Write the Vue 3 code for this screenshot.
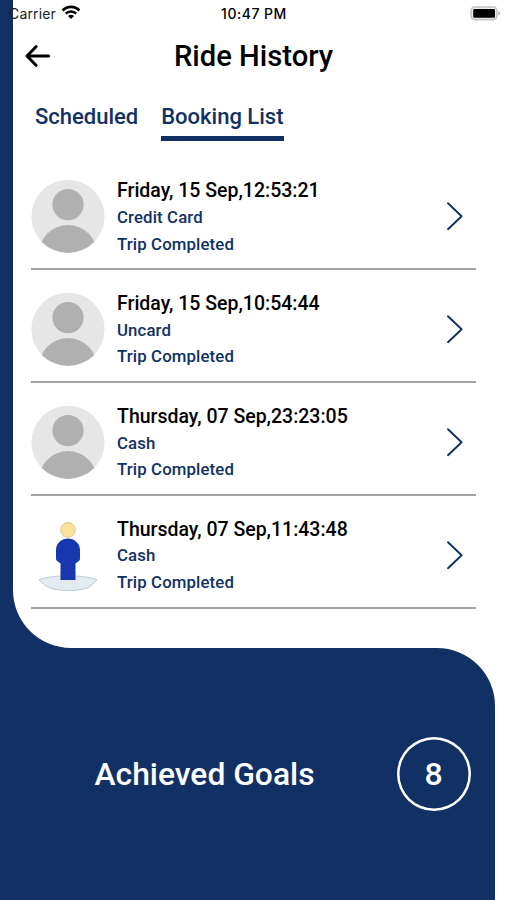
<script setup>
const rides = [
  { id: 1, date: 'Friday, 15 Sep,12:53:21', payment: 'Credit Card', status: 'Trip Completed', avatar: 'default' },
  { id: 2, date: 'Friday, 15 Sep,10:54:44', payment: 'Uncard', status: 'Trip Completed', avatar: 'default' },
  { id: 3, date: 'Thursday, 07 Sep,23:23:05', payment: 'Cash', status: 'Trip Completed', avatar: 'default' },
  { id: 4, date: 'Thursday, 07 Sep,11:43:48', payment: 'Cash', status: 'Trip Completed', avatar: 'figure' },
]
</script>

<template>
  <div class="screen">
    <main class="sheet">
      <div class="status-bar">
        <div class="carrier">
          <span>Carrier</span>
          <svg class="wifi" width="20" height="15" viewBox="0 0 20 15">
            <path d="M1.6 5.5C6.3.7 13.7.7 18.4 5.5" fill="none" stroke="#000" stroke-width="2.6" />
            <path d="M4.7 8.7C7.7 5.8 12.3 5.8 15.3 8.7" fill="none" stroke="#000" stroke-width="2.4" />
            <path d="M7 11C8.7 9.3 11.3 9.3 13 11L10 14Z" fill="#000" />
          </svg>
        </div>
        <span class="clock">10:47 PM</span>
        <svg class="battery" width="31" height="15" viewBox="0 0 31 15">
          <rect x="1" y="1" width="26" height="12.6" rx="3.8" fill="#eee" stroke="#c4c4c4" stroke-width="1.6" />
          <rect x="3.2" y="3" width="21.8" height="8.8" rx="1" fill="#000" />
          <path d="M28.4 5.2C30.7 6 30.7 8.6 28.4 9.4Z" fill="#aaa" />
        </svg>
      </div>

      <header class="header">
        <svg class="back" width="26" height="22" viewBox="0 0 26 22">
          <path d="M11 1.7L2 11L11 20.3M2.5 11H23.6" fill="none" stroke="#000" stroke-width="3" stroke-linecap="round" stroke-linejoin="round" />
        </svg>
        <h1>Ride History</h1>
      </header>

      <nav class="tabs">
        <span class="tab">Scheduled</span>
        <span class="tab active">Booking List</span>
      </nav>

      <ul class="rides">
        <li v-for="ride in rides" :key="ride.id" class="ride">
          <svg v-if="ride.avatar === 'default'" class="avatar" width="74" height="74" viewBox="0 0 74 74">
            <defs>
              <clipPath :id="'clip-' + ride.id"><circle cx="37" cy="37.3" r="36.6" /></clipPath>
            </defs>
            <circle cx="37" cy="37.3" r="36.6" fill="#e6e6e6" />
            <circle cx="37" cy="25.6" r="15.6" fill="#b0b0b0" />
            <circle cx="37" cy="75.1" r="29" fill="#b0b0b0" :clip-path="`url(#clip-${ride.id})`" />
          </svg>
          <svg v-else class="avatar" width="74" height="74" viewBox="0 0 74 74">
            <path d="M8 62C17 56.5 57 56.5 66 62C62 66 59 69 56 70C45 73.5 29 73.5 19 70C15 68.5 12 66 8 62Z" fill="#e2eaf2" stroke="#bccbd6" />
            <circle cx="37" cy="11.8" r="7.3" fill="#fbe39b" stroke="#d9c68b" />
            <path d="M25 32C25 25 31 20.5 37 20.5S49 25 49 32V41C49 43 46.5 43.5 44.5 45.5V62H29.5V45.5C27.5 43.5 25 43 25 41Z" fill="#1637ae" />
          </svg>
          <div class="info">
            <div class="date">{{ ride.date }}</div>
            <div class="detail">{{ ride.payment }}</div>
            <div class="detail">{{ ride.status }}</div>
          </div>
          <svg class="chevron" width="18" height="30" viewBox="0 0 18 30">
            <path d="M2 2.2L15.6 15.2L2 28.2" fill="none" stroke="#113164" stroke-width="1.9" stroke-linecap="round" stroke-linejoin="round" />
          </svg>
        </li>
      </ul>
    </main>

    <div class="footer">
      <section class="goals">
        <span class="goals-label">Achieved Goals</span>
        <span class="goals-count">8</span>
      </section>
    </div>
  </div>
</template>

<style>
body {
  margin: 0;
  background: #fff;
}
</style>

<style scoped>
.screen {
  width: 507px;
  height: 900px;
  display: flex;
  flex-direction: column;
  overflow: hidden;
  font-family: Roboto, sans-serif;
  font-weight: 500;
  color: #000;
  background: linear-gradient(to right, #113164 50%, #fff 50%);
}
.sheet {
  box-sizing: border-box;
  height: 648px;
  margin-left: 13px;
  background: #fff;
  border-bottom-left-radius: 58px;
}
.status-bar {
  height: 28px;
  margin-left: -13px;
  padding: 0 6px 0 9px;
  display: grid;
  grid-template-columns: 1fr auto 1fr;
  align-items: center;
  font-family: Inter, sans-serif;
  font-size: 14px;
}
.carrier {
  display: flex;
  align-items: center;
  gap: 5px;
  margin-top: -2px;
  font-weight: 400;
  letter-spacing: 0.15px;
  color: #222;
}
.wifi {
  margin-top: -1px;
}
.clock {
  margin: -2px 2px 0 0;
  font-size: 14px;
  letter-spacing: 0.5px;
}
.battery {
  justify-self: end;
  margin-top: -2px;
}
.header {
  height: 56px;
  margin-left: -13px;
  display: grid;
  grid-template-columns: 1fr auto 1fr;
  align-items: center;
}
.back {
  margin-left: 25px;
}
h1 {
  margin: 0;
  font-size: 29.2px;
  font-weight: 500;
  line-height: 34px;
}
.tabs {
  height: 73px;
  padding-left: 22px;
  display: flex;
  align-items: flex-start;
  gap: 23px;
  font-size: 22px;
  color: #113164;
}
.tab {
  padding-top: 19px;
  height: 33px;
  line-height: 28px;
}
.tab.active {
  border-bottom: 5px solid #113164;
}
.rides {
  list-style: none;
  margin: 0 31px 0 18px;
  padding: 0.7px 0 0;
}
.ride {
  box-sizing: border-box;
  height: 112.8px;
  padding-top: 21.8px;
  display: flex;
  border-bottom: 2px solid #a4a4a4;
}
.avatar {
  flex: none;
}
.info {
  flex: 1;
  padding-left: 12px;
}
.date {
  font-size: 19.5px;
  line-height: 24px;
  margin-bottom: 0.6px;
}
.detail {
  font-size: 16.8px;
  line-height: 26.6px;
  letter-spacing: 0.12px;
  color: #113164;
}
.chevron {
  margin: 22px 12.5px 0 0;
}
.footer {
  height: 252px;
  background: #fff;
}
.goals {
  box-sizing: border-box;
  width: 494.5px;
  height: 100%;
  padding: 0 24px 0 94.5px;
  display: flex;
  align-items: center;
  justify-content: space-between;
  color: #fff;
  background: #113164;
  border-top-right-radius: 58px;
}
.goals-label {
  font-size: 31.8px;
}
.goals-count {
  width: 74px;
  height: 74px;
  display: flex;
  align-items: center;
  justify-content: center;
  box-shadow: inset 0 0 0 2.5px #fff;
  border-radius: 50%;
  font-size: 32px;
}
</style>
